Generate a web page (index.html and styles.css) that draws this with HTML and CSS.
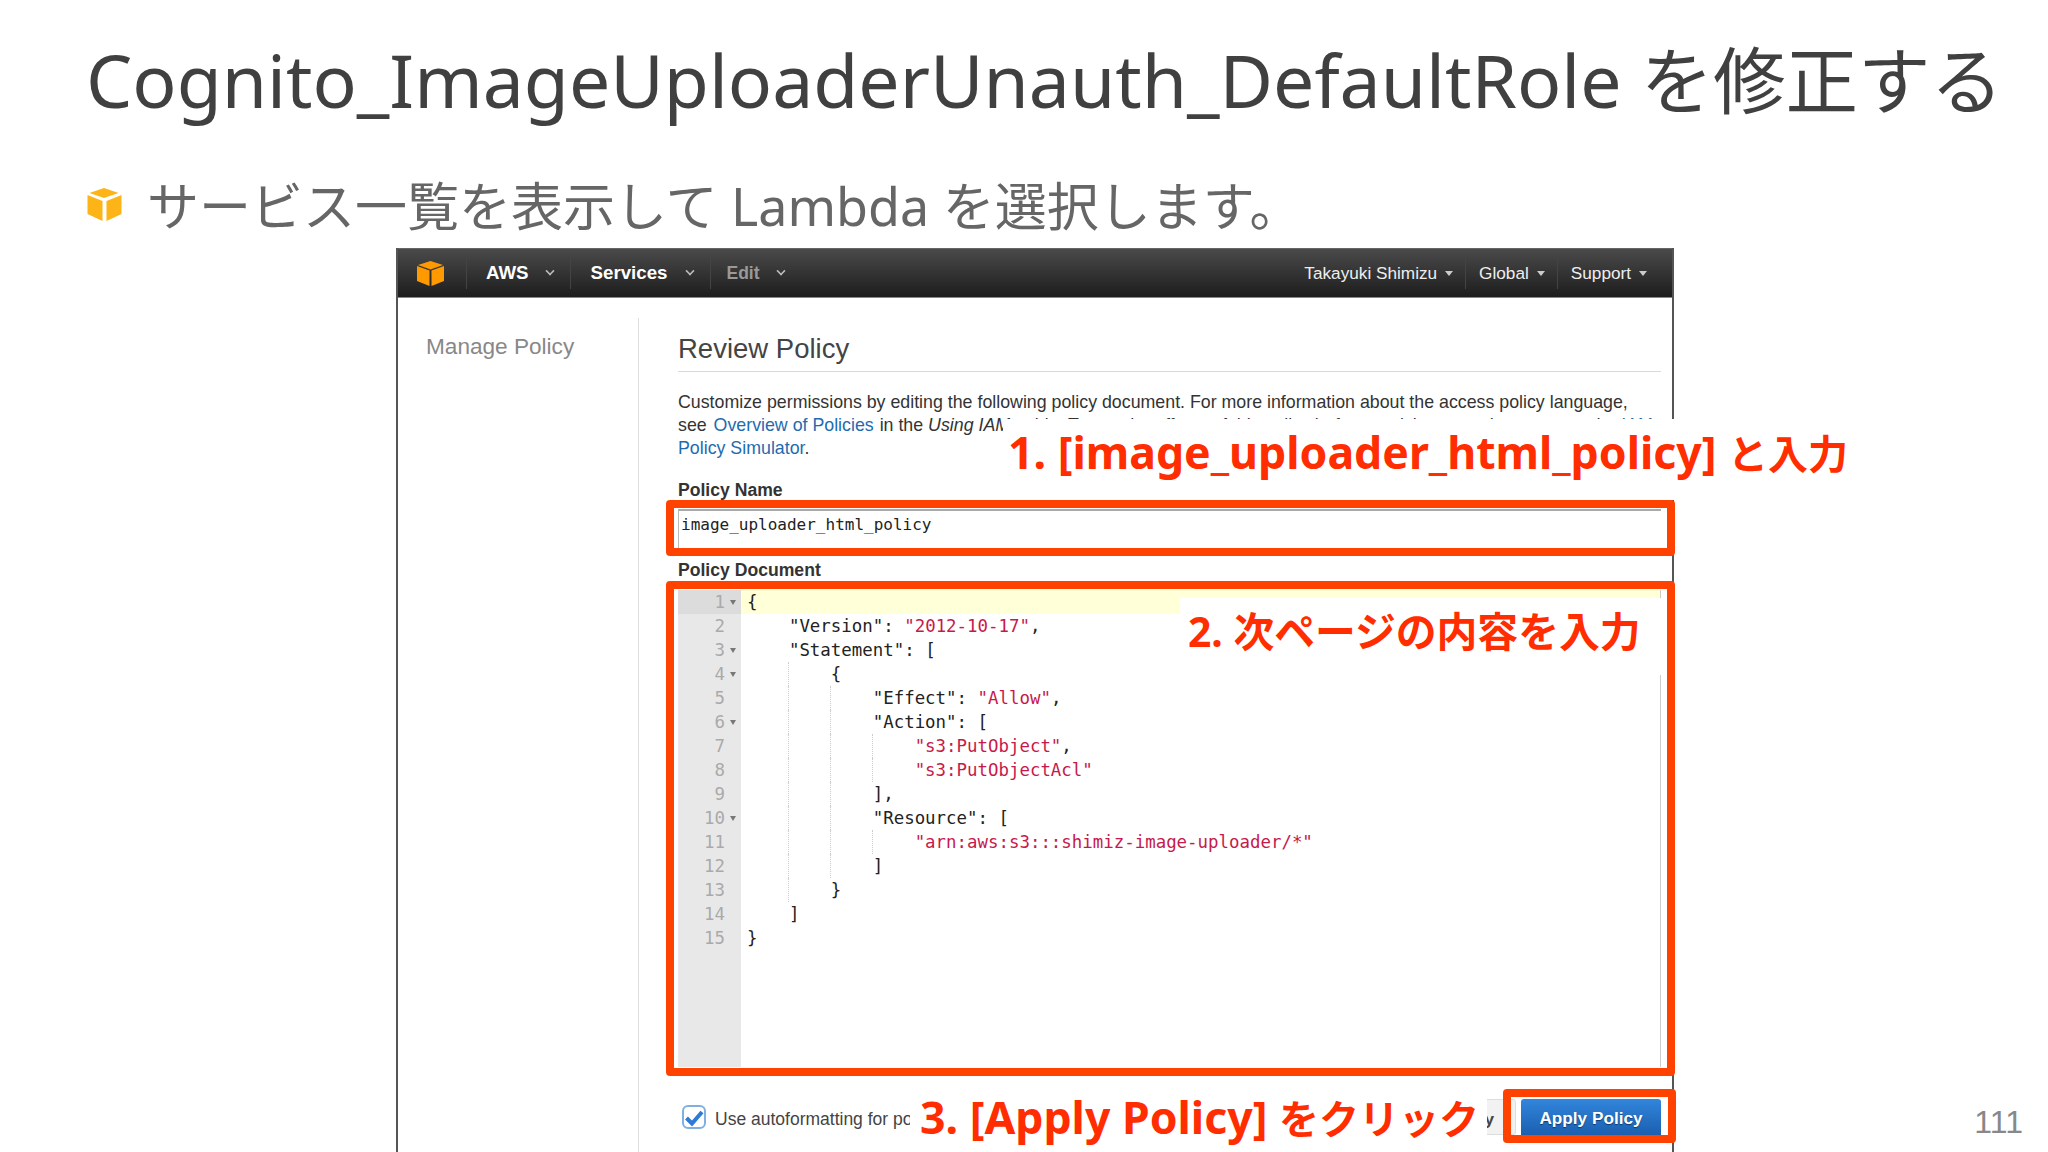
FILE: index.html
```html
<!DOCTYPE html>
<html lang="ja">
<head>
    <meta charset="UTF-8">
    <title>Cognito_ImageUploaderUnauth_DefaultRole を修正する</title>
    <link rel="stylesheet" href="styles.css">
</head>
<body>
    <div class="slide">
        <h1 class="slide-title">Cognito_ImageUploaderUnauth_DefaultRole <span class="ja">を修正する</span></h1>
        <div class="bullet">
            <svg class="cube" viewBox="0 0 34 33"><polygon points="16.500,0 31,5 16.500,10 2,5" fill="#fdb416"/><polygon points="0,7 15,13 15,33 0,26" fill="#fdb416"/><polygon points="19,13 34,7 34,26 19,33" fill="#fdb416"/></svg>
            <span>サービス一覧を表示して Lambda を選択します。</span>
        </div>

        <!-- AWS console capture -->
        <div class="shot">
            <div class="nav">
                <svg class="nav-logo" viewBox="0 0 27 25"><polygon points="13.500,0 26,4 13.500,8.500 1,4" fill="#f90"/><polygon points="0,5 12.500,9.500 12.500,25 0,20" fill="#f90"/><polygon points="14.500,9.500 27,5 27,20 14.500,25" fill="#f90"/></svg>
                <div class="nav-item strong">AWS<i class="chev"></i></div>
                <div class="nav-item strong services">Services<i class="chev"></i></div>
                <div class="nav-item faded">Edit<i class="chev"></i></div>
                <div class="nav-right">
                    <div class="nav-sub">Takayuki Shimizu<i class="caret"></i></div>
                    <div class="nav-sub">Global<i class="caret"></i></div>
                    <div class="nav-sub">Support<i class="caret"></i></div>
                </div>
            </div>
            <div class="console">
                <div class="side">Manage Policy</div>
                <div class="main">
                    <h2 class="review">Review Policy</h2>
                    <p class="intro">Customize permissions by editing the following policy document. For more information about the access policy language,<br>see <a class="gap">Overview of Policies</a> in the <em>Using IAM</em> guide. To test the effects of this policy before applying your changes, use the <a>IAM<br>Policy Simulator</a>.</p>
                    <div class="field-label name-label">Policy Name</div>
                    <div class="name-input">image_uploader_html_policy</div>
                    <div class="field-label doc-label">Policy Document</div>
                    <div class="editor">
                        <div class="gutter">
                            <div class="num active fold">1</div>
                            <div class="num">2</div>
                            <div class="num fold">3</div>
                            <div class="num fold">4</div>
                            <div class="num">5</div>
                            <div class="num fold">6</div>
                            <div class="num">7</div>
                            <div class="num">8</div>
                            <div class="num">9</div>
                            <div class="num fold">10</div>
                            <div class="num">11</div>
                            <div class="num">12</div>
                            <div class="num">13</div>
                            <div class="num">14</div>
                            <div class="num">15</div>
                        </div>
                        <div class="code">
                            <div class="ln active">{</div>
                            <div class="ln"><i class="ind"></i>"Version": <b>"2012-10-17"</b>,</div>
                            <div class="ln"><i class="ind"></i>"Statement": [</div>
                            <div class="ln"><i class="ind g"></i><i class="ind"></i>{</div>
                            <div class="ln"><i class="ind g"></i><i class="ind g"></i><i class="ind"></i>"Effect": <b>"Allow"</b>,</div>
                            <div class="ln"><i class="ind g"></i><i class="ind g"></i><i class="ind"></i>"Action": [</div>
                            <div class="ln"><i class="ind g"></i><i class="ind g"></i><i class="ind g"></i><i class="ind"></i><b>"s3:PutObject"</b>,</div>
                            <div class="ln"><i class="ind g"></i><i class="ind g"></i><i class="ind g"></i><i class="ind"></i><b>"s3:PutObjectAcl"</b></div>
                            <div class="ln"><i class="ind g"></i><i class="ind g"></i><i class="ind"></i>],</div>
                            <div class="ln"><i class="ind g"></i><i class="ind g"></i><i class="ind"></i>"Resource": [</div>
                            <div class="ln"><i class="ind g"></i><i class="ind g"></i><i class="ind g"></i><i class="ind"></i><b>"arn:aws:s3:::shimiz-image-uploader/*"</b></div>
                            <div class="ln"><i class="ind g"></i><i class="ind g"></i><i class="ind"></i>]</div>
                            <div class="ln"><i class="ind g"></i><i class="ind"></i>}</div>
                            <div class="ln"><i class="ind"></i>]</div>
                            <div class="ln">}</div>
                        </div>
                    </div>
                    <div class="actions">
                        <svg class="check" viewBox="0 0 24 24"><rect x="1" y="1" width="22" height="22" rx="5" fill="#fff" stroke="#7fb0e0" stroke-width="2"/><path d="M4.500 13L10 18.500L20 7" fill="none" stroke="#2e7bd6" stroke-width="4"/></svg>
                        <span class="auto">Use autoformatting for policy editing</span>
                        <div class="btn-validate">Validate Policy</div>
                        <div class="btn-apply">Apply Policy</div>
                    </div>
                </div>
            </div>
        </div>

        <!-- slide annotations on top of the capture -->
        <div class="mark mark-name"></div>
        <div class="mark mark-doc"></div>
        <div class="mark mark-btn"></div>
        <div class="note note-1">1. [image_uploader_html_policy] <span class="ja">と入力</span></div>
        <div class="note note-2">2. 次ページの内容を入力</div>
        <div class="note note-3">3. [Apply Policy] <span class="ja">をクリック</span></div>
        <div class="page-no">111</div>
    </div>
</body>
</html>
```

FILE: styles.css
```css
* {
    box-sizing: border-box;
}
body {
    margin: 0;
    background: #fff;
}
.slide {
    position: relative;
    width: 2048px;
    height: 1152px;
    overflow: hidden;
    background: #fff;
    font-family: "Noto Sans", "Noto Sans CJK JP", sans-serif;
    color: #404040;
}
.slide-title {
    margin: 0;
    padding: 30px 0 0 86px;
    height: 132px;
    font-size: 73.300px;
    line-height: 100px;
    font-weight: 400;
    white-space: nowrap;
}
.slide-title .ja {
    font-size: 72.500px;
}
.bullet {
    display: flex;
    align-items: center;
    gap: 25px;
    height: 60px;
    margin-top: 41px;
    padding-left: 87px;
    font-size: 52px;
    font-weight: 400;
    color: #666;
    white-space: nowrap;
}
.cube {
    width: 35px;
    height: 33px;
    margin-top: 3px;
    flex: none;
}

/* capture */
.shot {
    width: 1278px;
    height: 904px;
    margin: 15px 0 0 396px;
    border-left: 2px solid #555;
    border-right: 2px solid #555;
    font-family: "Liberation Sans", Arial, sans-serif;
    color: #333;
}
.nav {
    display: flex;
    align-items: center;
    height: 50px;
    padding-left: 19px;
    background: linear-gradient(#4a4a4a, #1d1d1d);
    border-top: 1px solid #666;
    border-bottom: 1px solid #888;
    color: #fff;
}
.nav-logo {
    width: 27px;
    height: 25px;
    margin-right: 22px;
}
.nav-item {
    display: flex;
    align-items: center;
    height: 32px;
    padding: 0 16px 0 19px;
    border-left: 1px solid #444;
    font-size: 18.700px;
}
.nav-item.strong {
    font-weight: bold;
}
.nav-item.services {
    padding-left: 20px;
}
.nav-item.services .chev {
    margin-left: 19px;
}
.nav-item.faded {
    padding-left: 15px;
    color: #999;
    font-size: 17.500px;
    font-weight: bold;
}
.chev {
    width: 8px;
    height: 8px;
    margin: -4px 0 0 17px;
    border-right: 2px solid #bbb;
    border-bottom: 2px solid #bbb;
    transform: rotate(45deg) scale(.8);
}
.nav-right {
    display: flex;
    align-items: center;
    margin-left: auto;
    padding-right: 25px;
}
.nav-sub {
    display: flex;
    align-items: center;
    height: 32px;
    padding: 0 0 0 13px;
    margin-left: 12px;
    border-left: 1px solid #444;
    font-size: 17.200px;
    color: #eee;
}
.nav-sub:first-child {
    border-left: 0;
}
.caret {
    margin-left: 8px;
    border-top: 5px solid #ccc;
    border-left: 4px solid transparent;
    border-right: 4px solid transparent;
}
.console {
    display: flex;
    height: 854px;
}
.side {
    width: 241px;
    margin-top: 20px;
    padding: 16px 0 0 28px;
    border-right: 1px solid #ddd;
    font-size: 22.600px;
    color: #888;
}
.main {
    flex: 1;
    padding: 0 11px 0 39px;
}
.review {
    margin: 0;
    height: 74px;
    padding-top: 33px;
    border-bottom: 1px solid #d8d8de;
    font-size: 27.500px;
    line-height: 36px;
    font-weight: normal;
    color: #444;
}
.intro {
    margin: 19px 0 0;
    font-size: 17.800px;
    line-height: 23px;
    white-space: nowrap;
}
.intro a {
    color: #1f6bb0;
}
.intro .gap {
    margin: 0 1px 0 2px;
}
.field-label {
    font-size: 17.600px;
    line-height: 24px;
    font-weight: bold;
}
.name-label {
    margin-top: 18px;
}
.name-input {
    height: 44px;
    margin: 7px 0 0;
    padding-left: 2px;
    border-top: 2px solid #aaa;
    border-left: 1px solid #bbb;
    font-family: "DejaVu Sans Mono", monospace;
    font-size: 16px;
    line-height: 28px;
    color: #222;
}
.doc-label {
    margin-top: 5px;
}
.editor {
    display: flex;
    height: 477px;
    margin-top: 8px;
    border-right: 1px solid #ccc;
    font-family: "DejaVu Sans Mono", monospace;
    font-size: 17.420px;
    line-height: 24px;
}
.gutter {
    width: 63px;
    flex: none;
    background: #e8e8e8;
    color: #aaa;
}
.num {
    position: relative;
    height: 24px;
    padding-right: 16px;
    text-align: right;
}
.num.active {
    background: #dcdcdc;
}
.num.fold::after {
    content: "";
    position: absolute;
    right: 5px;
    top: 10px;
    border-top: 5px solid #777;
    border-left: 3px solid transparent;
    border-right: 3px solid transparent;
}
.code {
    flex: 1;
    padding-left: 6px;
    color: #222;
}
.ln {
    height: 24px;
    white-space: pre;
}
.ln.active {
    margin-left: -6px;
    padding-left: 6px;
    background: #ffffd8;
}
.ln b {
    font-weight: normal;
    color: #c7194b;
}
.ind {
    display: inline-block;
    width: 4ch;
    height: 24px;
    vertical-align: top;
}
.ind.g {
    border-right: 1px dotted #ccc;
}
.actions {
    display: flex;
    align-items: center;
    margin-top: 26px;
    height: 48px;
    padding-left: 4px;
    font-size: 17.500px;
}
.check {
    width: 24px;
    height: 24px;
    margin-right: 9px;
}
.auto {
    color: #444;
    white-space: nowrap;
    padding-top: 4px;
}
.btn-validate {
    width: 182px;
    height: 36px;
    margin-left: auto;
    margin-right: 5px;
    padding-right: 21px;
    line-height: 38px;
    text-align: right;
    background: #f2f2f2;
    border: 1px solid #ddd;
    border-radius: 3px;
    color: #444;
    font-size: 17.200px;
    font-weight: bold;
    white-space: nowrap;
}
.btn-apply {
    width: 140px;
    height: 36px;
    line-height: 39px;
    text-align: center;
    background: linear-gradient(#3186dc, #1b5fb0);
    border-radius: 3px 3px 0 0;
    color: #fff;
    font-size: 17.200px;
    font-weight: bold;
    text-shadow: 0 1px 1px #0b3a70;
    white-space: nowrap;
}

/* orange frames and red notes */
.mark {
    position: absolute;
    border: 8px solid #ff4200;
    border-radius: 4px;
}
.mark-name {
    left: 666px;
    top: 500px;
    width: 1009px;
    height: 56px;
}
.mark-doc {
    left: 666px;
    top: 581px;
    width: 1009px;
    height: 495px;
}
.mark-btn {
    left: 1503px;
    top: 1089px;
    width: 173px;
    height: 54px;
}
.note {
    position: absolute;
    background: #fff;
    color: #ff2d00;
    font-weight: bold;
    font-size: 44.600px;
    white-space: nowrap;
}
.note .ja {
    font-size: 40px;
}
.note-1 {
    left: 1003px;
    top: 419px;
    width: 857px;
    height: 81px;
    padding: 5px 0 0 5px;
    line-height: 56px;
}
.note-2 {
    left: 1180px;
    top: 598px;
    width: 481px;
    height: 77px;
    padding: 5px 0 0 8px;
    font-size: 40.800px;
    line-height: 56px;
}
.note-3 {
    left: 910px;
    top: 1092px;
    width: 577px;
    height: 50px;
    padding-left: 10px;
    line-height: 50px;
}
.page-no {
    position: absolute;
    right: 25px;
    top: 1102px;
    font-family: "Liberation Sans", Arial, sans-serif;
    font-size: 32px;
    line-height: 40px;
    color: #888;
}
```
